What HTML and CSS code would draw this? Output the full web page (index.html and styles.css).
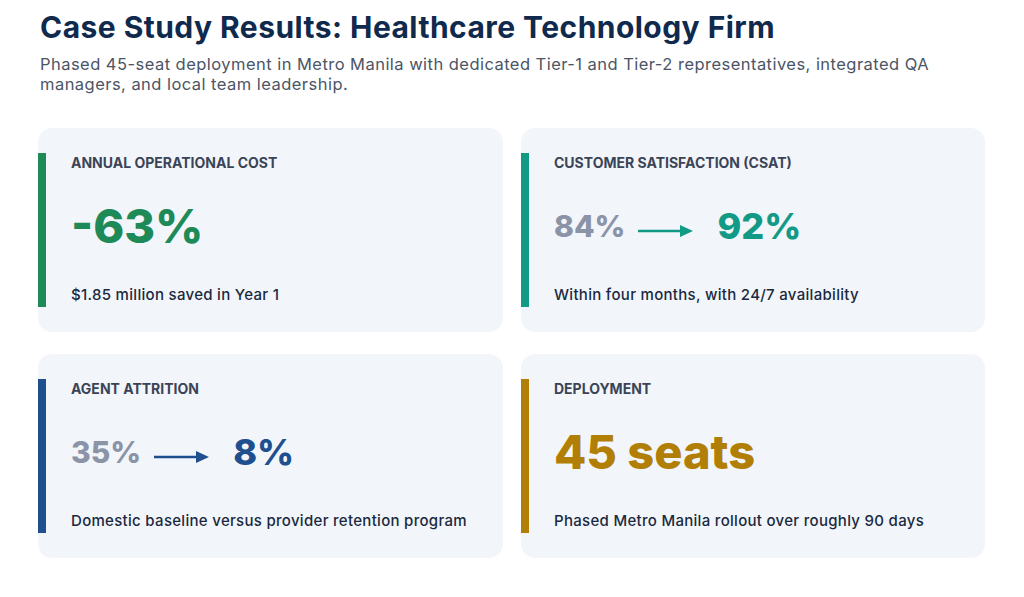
FILE: index.html
```html
<!DOCTYPE html>
<html lang="en">
<head>
<meta charset="utf-8">
<title>Case Study Results</title>
<link rel="stylesheet" href="styles.css">
</head>
<body>
<main class="page">
  <h1 class="title">Case Study Results: Healthcare Technology Firm</h1>
  <p class="subtitle">Phased 45-seat deployment in Metro Manila with dedicated Tier-1 and Tier-2 representatives, integrated QA managers, and local team leadership.</p>
  <section class="grid">
    <article class="card">
      <div class="card-inner accent-green">
        <div class="label">ANNUAL OPERATIONAL COST</div>
        <div class="value big green">-63%</div>
        <div class="desc">$1.85 million saved in Year 1</div>
      </div>
    </article>
    <article class="card">
      <div class="card-inner accent-teal">
        <div class="label">CUSTOMER SATISFACTION (CSAT)</div>
        <div class="value compare">
          <span class="old">84%</span>
          <svg class="arrow" width="56" height="14" viewBox="0 0 56 14"><line x1="0" y1="7" x2="44" y2="7" stroke="#139a86" stroke-width="2.5"/><polygon points="42,1 55,7 42,13" fill="#139a86"/></svg>
          <span class="new teal">92%</span>
        </div>
        <div class="desc">Within four months, with 24/7 availability</div>
      </div>
    </article>
    <article class="card">
      <div class="card-inner accent-blue">
        <div class="label">AGENT ATTRITION</div>
        <div class="value compare">
          <span class="old">35%</span>
          <svg class="arrow" width="56" height="14" viewBox="0 0 56 14"><line x1="0" y1="7" x2="44" y2="7" stroke="#1f4f8f" stroke-width="2.5"/><polygon points="42,1 55,7 42,13" fill="#1f4f8f"/></svg>
          <span class="new blue">8%</span>
        </div>
        <div class="desc">Domestic baseline versus provider retention program</div>
      </div>
    </article>
    <article class="card">
      <div class="card-inner accent-gold">
        <div class="label">DEPLOYMENT</div>
        <div class="value big gold">45 seats</div>
        <div class="desc">Phased Metro Manila rollout over roughly 90 days</div>
      </div>
    </article>
  </section>
</main>
</body>
</html>
```
FILE: styles.css
```css
* { box-sizing: border-box; }
body {
  margin: 0;
  background: #ffffff;
  font-family: Inter, "Noto Sans", "Liberation Sans", sans-serif;
}
.page {
  padding: 9px 39px 0 38px;
}
.title {
  margin: 0 0 0 2px;
  font-size: 30px;
  line-height: 36px;
  font-weight: 700;
  letter-spacing: 0.45px;
  color: #0f2a4d;
}
.subtitle {
  margin: 9px 0 0 2px;
  font-size: 16.5px;
  line-height: 20px;
  letter-spacing: 0.46px;
  color: #4b5565;
  max-width: 940px;
}
.grid {
  margin-top: 34px;
  display: grid;
  grid-template-columns: 465px 464px;
  column-gap: 18px;
  row-gap: 22px;
}
.card {
  background: #f2f6fb;
  border-radius: 14px;
  height: 204px;
  padding: 25px 0;
}
.card-inner {
  height: 154px;
  border-left: 8px solid #1d8a57;
  padding-left: 25px;
  padding-bottom: 2px;
  display: flex;
  flex-direction: column;
}
.accent-green { border-left-color: #1d8a57; }
.accent-teal { border-left-color: #139a86; }
.accent-blue { border-left-color: #1f4f8f; }
.accent-gold { border-left-color: #b27f06; }
.label {
  font-size: 14px;
  line-height: 20px;
  font-weight: 700;
  color: #3b4456;
}
.value {
  margin-top: 28px;
  height: 50px;
  font-weight: 800;
}
.big {
  font-size: 47px;
  line-height: 50px;
}
.compare {
  display: flex;
  align-items: center;
}
.old {
  font-size: 30px;
  line-height: 1;
  color: #8b93a7;
}
.new {
  font-size: 36px;
  line-height: 1;
}
.arrow {
  margin: 10px 23px 0 13px;
  flex: none;
}
.green { color: #1d8a57; }
.teal { color: #139a86; }
.blue { color: #1f4f8f; }
.gold { color: #b27f06; }
.desc {
  margin-top: auto;
  font-size: 15px;
  line-height: 20px;
  font-weight: 500;
  letter-spacing: 0.3px;
  color: #1b2940;
}
```
